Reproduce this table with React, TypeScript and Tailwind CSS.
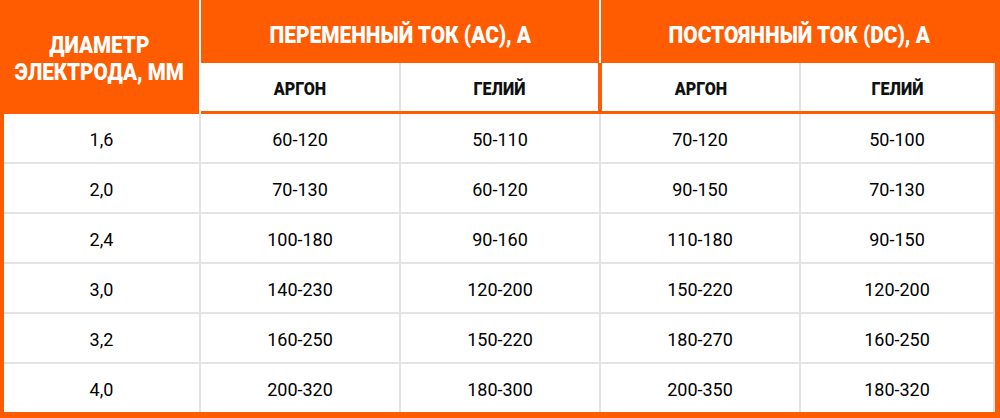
import React from "react";

const rows: [string, string, string, string, string][] = [
  ["1,6", "60-120", "50-110", "70-120", "50-100"],
  ["2,0", "70-130", "60-120", "90-150", "70-130"],
  ["2,4", "100-180", "90-160", "110-180", "90-150"],
  ["3,0", "140-230", "120-200", "150-220", "120-200"],
  ["3,2", "160-250", "150-220", "180-270", "160-250"],
  ["4,0", "200-320", "180-300", "200-350", "180-320"],
];

function Cond({ children, className = "" }: { children: React.ReactNode; className?: string }) {
  return (
    <span className={"inline-block origin-center whitespace-nowrap " + className}>
      {children}
    </span>
  );
}

export default function App() {
  return (
    <div
      className="w-[1000px] h-[418px] bg-[#ff5b00] flex flex-col overflow-hidden"
      style={{ fontFamily: "Roboto, 'Liberation Sans', sans-serif" }}
    >
      {/* header */}
      <div className="flex h-[114px] shrink-0">
        <div className="w-[199px] flex flex-col items-center justify-center text-white font-black text-[24px] leading-[27px] pt-[4px]">
          <Cond className="scale-x-[0.86]">ДИАМЕТР</Cond>
          <Cond className="scale-x-[0.86]">ЭЛЕКТРОДА, ММ</Cond>
        </div>
        <div className="w-[2px] bg-white" />
        <div className="flex-1 flex flex-col">
          <div className="h-[63px] flex">
            <div className="w-[398px] flex items-center justify-center text-white font-black text-[24px] pt-[7px]">
              <Cond className="scale-x-[0.87]">ПЕРЕМЕННЫЙ ТОК (АС), А</Cond>
            </div>
            <div className="w-[2px] bg-white" />
            <div className="flex-1 flex items-center justify-center text-white font-black text-[24px] pt-[7px] pr-[3px]">
              <Cond className="scale-x-[0.87]">ПОСТОЯННЫЙ ТОК (DC), А</Cond>
            </div>
          </div>
          <div className="h-[48px] flex text-[19px] font-black text-[#111]">
            <div className="w-[198px] bg-white flex items-center justify-center pt-[4px]">
              <Cond className="scale-x-[0.85]">АРГОН</Cond>
            </div>
            <div className="w-[2px] bg-[#e3e3e3]" />
            <div className="w-[197px] bg-white flex items-center justify-center pt-[4px]">
              <Cond className="scale-x-[0.85]">ГЕЛИЙ</Cond>
            </div>
            <div className="w-[4px]" />
            <div className="w-[197px] bg-white flex items-center justify-center pt-[4px]">
              <Cond className="scale-x-[0.85]">АРГОН</Cond>
            </div>
            <div className="w-[2px] bg-[#e3e3e3]" />
            <div className="w-[192px] bg-white flex items-center justify-center pt-[4px]">
              <Cond className="scale-x-[0.85]">ГЕЛИЙ</Cond>
            </div>
            <div className="w-[2px] bg-[#e3e3e3]" />
          </div>
        </div>
      </div>
      {/* body */}
      <div className="ml-[4px] w-[991px] h-[298px] shrink-0 grid grid-cols-[195px_198px_198px_198px_192px] grid-rows-6 gap-[2px] pr-[2px] bg-[#e3e3e3]">
        {rows.map((r, i) =>
          r.map((v, j) => (
            <div
              key={i + "-" + j}
              className="bg-white flex items-center justify-center text-[18px] text-[#000] pt-[2px]"
            >
              {v}
            </div>
          ))
        )}
      </div>
    </div>
  );
}
